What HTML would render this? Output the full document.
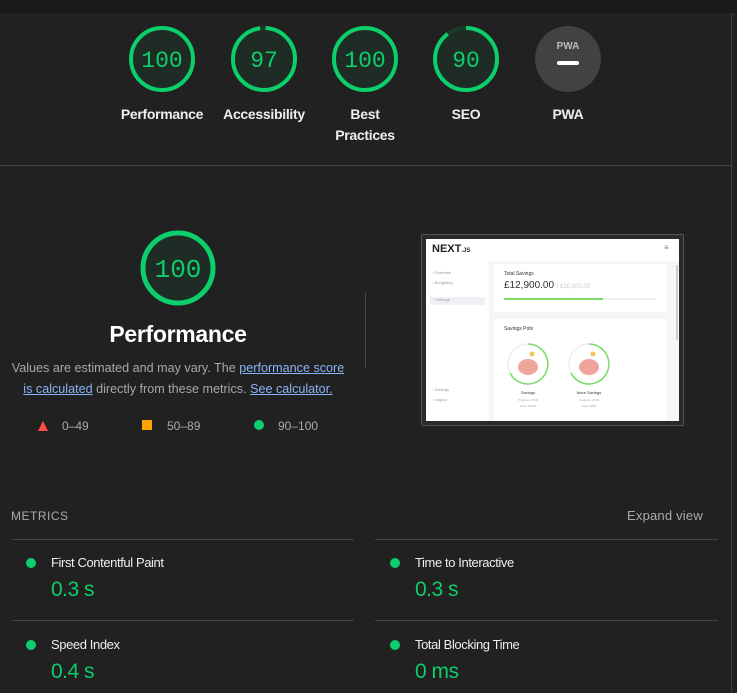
<!DOCTYPE html>
<html><head><style>
body{margin:0;width:737px;height:693px;background:#212121;font-family:"Liberation Sans",sans-serif;position:relative;overflow:hidden;color:#e8e8e8}
.a{position:absolute}
.lbl{position:absolute;width:110px;text-align:center;font-size:14px;color:#eee;line-height:21px;font-weight:bold;letter-spacing:-0.3px}
.hr{position:absolute;height:1px;background:#444}
.dot{position:absolute;width:10px;height:10px;border-radius:50%;background:#0cce6b}
.mt{position:absolute;font-size:13px;color:#eee;letter-spacing:-0.4px}
.mv{position:absolute;font-size:21px;color:#0cce6b;letter-spacing:-0.5px}
</style></head><body>
<div class="a" style="left:0;top:0;width:737px;height:13px;background:#1a1a1a"></div>
<div class="a" style="left:731px;top:13px;width:1px;height:680px;background:#3d3d3d"></div>
<div class="hr" style="left:0;top:165px;width:731px"></div>
<svg class="a" style="left:0;top:0" width="737" height="160">
<g stroke-width="4">
<circle cx="162" cy="59" r="31" fill="#1f2c25" stroke="#0cce6b"/>
<circle cx="264" cy="59" r="31" fill="#1f2c25" stroke="#1b3a2a"/>
<circle cx="264" cy="59" r="31" fill="none" stroke="#0cce6b" stroke-dasharray="189 200" transform="rotate(-87 264 59)"/>
<circle cx="365" cy="59" r="31" fill="#1f2c25" stroke="#0cce6b"/>
<circle cx="466" cy="59" r="31" fill="#1f2c25" stroke="#1b3a2a"/>
<circle cx="466" cy="59" r="31" fill="none" stroke="#0cce6b" stroke-dasharray="175 200" transform="rotate(-90 466 59)"/>
<circle cx="568" cy="59" r="33" fill="#424242" stroke="none"/>
</g>
<g font-family="Liberation Mono,monospace" font-size="23" fill="#0cce6b" text-anchor="middle">
<text x="162" y="67">100</text><text x="264" y="67">97</text><text x="365" y="67">100</text><text x="466" y="67">90</text>
</g>
<text x="568" y="49" font-size="10" font-weight="bold" fill="#bbb" text-anchor="middle" font-family="Liberation Sans,sans-serif">PWA</text>
<rect x="557" y="61" width="22" height="4" rx="2" fill="#fff"/>
</svg>
<div class="lbl" style="left:107px;top:104px">Performance</div>
<div class="lbl" style="left:209px;top:104px">Accessibility</div>
<div class="lbl" style="left:310px;top:104px">Best<br>Practices</div>
<div class="lbl" style="left:411px;top:104px">SEO</div>
<div class="lbl" style="left:513px;top:104px">PWA</div>

<svg class="a" style="left:130px;top:224px" width="100" height="90">
<circle cx="48" cy="44" r="35" fill="#1f2c25" stroke="#0cce6b" stroke-width="5"/>
<text x="48" y="53" font-family="Liberation Mono,monospace" font-size="26" fill="#0cce6b" text-anchor="middle">100</text>
</svg>
<div class="a" style="left:0;width:356px;top:321px;text-align:center;font-size:23px;color:#fff;font-weight:bold;letter-spacing:-0.3px">Performance</div>
<div class="a" style="left:0;width:356px;top:358px;text-align:center;font-size:12.6px;line-height:21px;color:#a8a8a8">Values are estimated and may vary. The <u style="color:#8ab4f8">performance score</u><br><u style="color:#8ab4f8">is calculated</u> directly from these metrics. <u style="color:#8ab4f8">See calculator.</u></div>
<div class="a" style="left:365px;top:292px;width:1px;height:76px;background:#444"></div>
<svg class="a" style="left:37px;top:420px" width="12" height="12"><path d="M6 1L11 11H1Z" fill="#ff4e42"/></svg>
<div class="a" style="left:62px;top:419px;font-size:12px;color:#aaa">0–49</div>
<div class="a" style="left:142px;top:420px;width:10px;height:10px;background:#ffa400"></div>
<div class="a" style="left:167px;top:419px;font-size:12px;color:#aaa">50–89</div>
<div class="a" style="left:254px;top:420px;width:10px;height:10px;border-radius:50%;background:#0cce6b"></div>
<div class="a" style="left:278px;top:419px;font-size:12px;color:#aaa">90–100</div>

<div class="a" style="left:421px;top:234px;width:261px;height:190px;background:#2a2a2a;border:1px solid #555;border-radius:2px"></div>
<div class="a" style="left:426px;top:239px;width:253px;height:182px;background:#f5f6f8;overflow:hidden">
 <div class="a" style="left:0;top:0;width:253px;height:22px;background:#fff"></div>
 <div class="a" style="left:6px;top:4px;font-size:11px;font-weight:bold;color:#222">NEXT<span style="font-size:6px">.JS</span></div>
 <div class="a" style="left:238px;top:4px;font-size:8px;color:#777">≡</div>
 <div class="a" style="left:0;top:22px;width:63px;height:160px;background:#fff"></div>
 <div class="a" style="left:6px;top:31px;font-size:4px;color:#999">▫ Overview<br><br>▫ Budgeting<br><br></div>
 <div class="a" style="left:4px;top:58px;width:52px;height:8px;background:#eef0f3;font-size:4px;color:#999;padding-left:3px">▫ Savings</div>
 <div class="a" style="left:6px;top:148px;font-size:4px;color:#999">▫ Settings<br><br>▫ Logout</div>
 <div class="a" style="left:68px;top:25px;width:173px;height:48px;background:#fff"></div>
 <div class="a" style="left:78px;top:32px;font-size:5px;color:#333">Total Savings</div>
 <div class="a" style="left:78px;top:41px;font-size:10px;color:#333">£12,900.00 <span style="font-size:6px;color:#ccc">/ £20,000.00</span></div>
 <div class="a" style="left:78px;top:59px;width:152px;height:2px;background:#eee"></div>
 <div class="a" style="left:78px;top:59px;width:99px;height:2px;background:#7ddc6b"></div>
 <div class="a" style="left:68px;top:80px;width:173px;height:102px;background:#fff"></div>
 <div class="a" style="left:78px;top:87px;font-size:5px;color:#333">Savings Pots</div>
 <svg class="a" style="left:80px;top:103px" width="120" height="80">
  <circle cx="22" cy="22" r="20" fill="none" stroke="#eee" stroke-width="1.5"/>
  <circle cx="83" cy="22" r="20" fill="none" stroke="#eee" stroke-width="1.5"/>
  <path d="M22 2A20 20 0 1 1 4 31" fill="none" stroke="#7ddc6b" stroke-width="1.5"/>
  <path d="M83 2A20 20 0 1 1 65 31" fill="none" stroke="#7ddc6b" stroke-width="1.5"/>
  <ellipse cx="22" cy="25" rx="10" ry="8" fill="#f0a49c"/>
  <ellipse cx="83" cy="25" rx="10" ry="8" fill="#f0a49c"/>
  <circle cx="26" cy="12" r="2.5" fill="#f3c45a"/><circle cx="87" cy="12" r="2.5" fill="#f3c45a"/>
  <text x="22" y="52" font-size="4" fill="#333" text-anchor="middle">Savings</text>
  <text x="83" y="52" font-size="4" fill="#333" text-anchor="middle">More Savings</text>
  <text x="22" y="59" font-size="3" fill="#aaa" text-anchor="middle">Progress: £800</text>
  <text x="83" y="59" font-size="3" fill="#aaa" text-anchor="middle">Progress: £700</text>
  <text x="22" y="65" font-size="3" fill="#aaa" text-anchor="middle">Goal: £1000</text>
  <text x="83" y="65" font-size="3" fill="#aaa" text-anchor="middle">Goal: £800</text>
 </svg>
 <div class="a" style="left:250px;top:26px;width:2px;height:75px;background:#ccc"></div>
</div>

<div class="a" style="left:11px;top:509px;font-size:12px;color:#aaa;letter-spacing:.5px">METRICS</div>
<div class="a" style="left:627px;top:508px;font-size:13px;color:#aaa;letter-spacing:0.2px">Expand view</div>
<div class="hr" style="left:12px;top:539px;width:342px"></div>
<div class="hr" style="left:375px;top:539px;width:343px"></div>
<div class="hr" style="left:12px;top:620px;width:342px"></div>
<div class="hr" style="left:375px;top:620px;width:343px"></div>
<div class="dot" style="left:26px;top:558px"></div><div class="mt" style="left:51px;top:555px">First Contentful Paint</div><div class="mv" style="left:51px;top:578px">0.3 s</div>
<div class="dot" style="left:390px;top:558px"></div><div class="mt" style="left:415px;top:555px">Time to Interactive</div><div class="mv" style="left:415px;top:578px">0.3 s</div>
<div class="dot" style="left:26px;top:640px"></div><div class="mt" style="left:51px;top:637px">Speed Index</div><div class="mv" style="left:51px;top:660px">0.4 s</div>
<div class="dot" style="left:390px;top:640px"></div><div class="mt" style="left:415px;top:637px">Total Blocking Time</div><div class="mv" style="left:415px;top:660px">0 ms</div>
</body></html>
